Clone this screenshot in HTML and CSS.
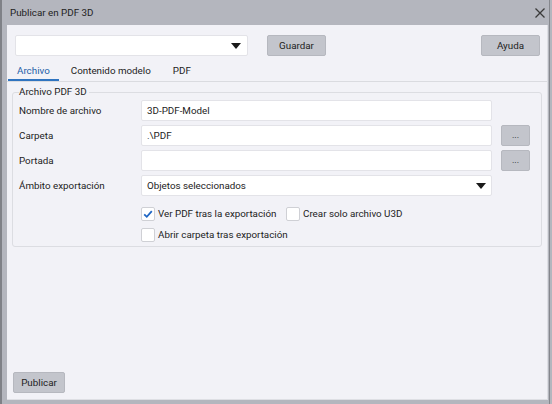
FILE: index.html
```html
<!DOCTYPE html>
<html lang="es">
<head>
<meta charset="utf-8">
<title>Publicar en PDF 3D</title>
<link rel="stylesheet" href="styles.css">
</head>
<body>
<div class="window">
  <div class="titlebar">
    <span class="title">Publicar en PDF 3D</span>
    <svg class="close" width="10" height="10" viewBox="0 0 10 10"><path d="M0.5 0.5 L9.5 9.5 M9.5 0.5 L0.5 9.5" stroke="#3a3a3a" stroke-width="1.3" fill="none"/></svg>
  </div>
  <div class="client">
    <div class="toprow">
      <div class="combo top-combo"><span class="combo-text"></span><span class="arrow"></span></div>
      <button class="btn guardar">Guardar</button>
      <span class="spacer"></span>
      <button class="btn ayuda">Ayuda</button>
    </div>
    <div class="tabs">
      <span class="tab active">Archivo</span>
      <span class="tab">Contenido modelo</span>
      <span class="tab">PDF</span>
    </div>
    <div class="page">
      <fieldset class="group">
        <legend>Archivo PDF 3D</legend>
        <div class="form">
          <label class="lbl">Nombre de archivo</label>
          <div class="field">3D-PDF-Model</div>
          <span></span><span></span>
          <label class="lbl">Carpeta</label>
          <div class="field">.\PDF</div>
          <span></span>
          <button class="btn dots">...</button>
          <label class="lbl">Portada</label>
          <div class="field"></div>
          <span></span>
          <button class="btn dots">...</button>
          <label class="lbl">Ámbito exportación</label>
          <div class="combo field"><span class="combo-text">Objetos seleccionados</span><span class="arrow"></span></div>
          <span></span><span></span>
        </div>
        <div class="checks">
          <div class="checkrow">
            <label class="check c1"><span class="box checked"><svg width="12" height="12" viewBox="0 0 12 12"><path d="M2.2 6.3 L4.8 8.8 L9.8 3.2" stroke="#1f66c4" stroke-width="1.8" fill="none"/></svg></span>Ver PDF tras la exportación</label>
            <label class="check"><span class="box"></span>Crear solo archivo U3D</label>
          </div>
          <div class="checkrow">
            <label class="check"><span class="box"></span>Abrir carpeta tras exportación</label>
          </div>
        </div>
      </fieldset>
    </div>
    <div class="footer">
      <button class="btn publicar">Publicar</button>
    </div>
  </div>
</div>
</body>
</html>
```

FILE: styles.css
```css
* { box-sizing: border-box; }
html, body { margin: 0; padding: 0; }
body {
  width: 552px;
  height: 404px;
  overflow: hidden;
  font-family: Roboto, "Noto Sans", sans-serif;
  font-size: 9.8px;
  color: #222;
  background: #b4b6be;
}
.window {
  width: 552px;
  height: 404px;
  display: flex;
  flex-direction: column;
  background: #b4b6be;
  border-left: 2px solid #7f8187;
  box-shadow: inset -2px 0 0 #b4b6be, inset -3px 0 0 #85878d;
}
.titlebar {
  height: 25px;
  flex: none;
  display: flex;
  align-items: center;
  padding: 0 6px 0 8px;
  color: #222;
}
.title { flex: 1; }
.close { margin-right: 1px; }
.client {
  flex: 1;
  margin: 0 4px 4px 5px;
  background: #f2f2f7;
  border-right: 1px solid #dedfe4;
  border-bottom: 1px solid #dedfe4;
  display: flex;
  flex-direction: column;
}
.toprow {
  display: flex;
  align-items: center;
  padding: 10px 7px 0 8px;
}
.combo {
  background: #fff;
  border: 1px solid #e3e3e8;
  border-radius: 2px;
  height: 21px;
  display: flex;
  align-items: center;
  padding: 0 6px 0 5px;
}
.top-combo { width: 233px; }
.combo-text { flex: 1; }
.arrow {
  width: 0; height: 0;
  border-left: 5px solid transparent;
  border-right: 5px solid transparent;
  border-top: 6px solid #1a1a1a;
}
.btn {
  font: inherit;
  color: #222;
  background: #c3c5cc;
  border: 1px solid #b6b8bf;
  border-radius: 2px;
  height: 21px;
  padding: 0;
}
.guardar { width: 59px; margin-left: 19px; }
.spacer { flex: 1; }
.ayuda { width: 59px; }
.tabs {
  display: flex;
  margin-top: 8px;
  padding-left: 1px;
  border-bottom: 1px solid #dadbe0;
  height: 18px;
  align-items: flex-end;
}
.tab {
  padding: 0 10px 1px 10px;
  line-height: 14px;
  border-bottom: 2px solid transparent;
}
.tab + .tab { margin-left: 2px; }
.tab.active { color: #1d5ea8; border-bottom-color: #2f74c0; padding: 0 9px 1px 9px; }
.page { padding: 3px 5px 0 5px; }
.group {
  margin: 0;
  border: 1px solid #dcdde2;
  border-radius: 3px;
  padding: 1px 11px 4px 6px;
}
.group legend {
  padding: 0 2px 0 0;
  margin-left: 0;
  line-height: 14px;
}
.form {
  display: grid;
  grid-template-columns: 122px 351px 9px 29px;
  grid-auto-rows: 21px;
  row-gap: 4px;
  align-items: center;
}
.field {
  background: #fff;
  border: 1px solid #e3e3e8;
  border-radius: 2px;
  height: 21px;
  display: flex;
  align-items: center;
  padding: 0 5px;
}
.dots { width: 29px; height: 21px; font-size: 9px; line-height: 1; }
.checks {
  padding-left: 122px;
  margin-top: 10px;
  display: flex;
  flex-direction: column;
  gap: 6px;
}
.checkrow { display: flex; }
.check {
  display: flex;
  align-items: center;
  height: 15px;
  white-space: nowrap;
}
.c1 { width: 145px; }
.box {
  flex: none;
  width: 14px;
  height: 14px;
  background: #fff;
  border: 1px solid #cfd0d5;
  border-radius: 2px;
  margin-right: 3px;
  display: flex;
  align-items: center;
  justify-content: center;
}
.footer {
  margin-top: auto;
  padding: 0 0 6px 6px;
}
.publicar { width: 52px; }
```
